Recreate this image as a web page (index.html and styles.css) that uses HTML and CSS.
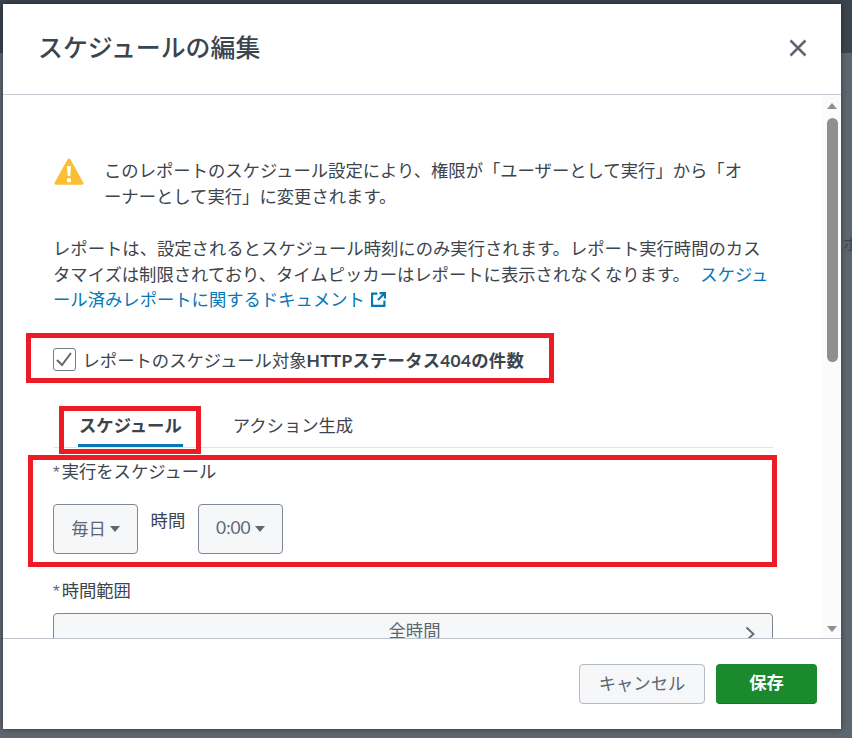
FILE: index.html
```html
<!DOCTYPE html>
<html lang="ja">
<head>
<meta charset="utf-8">
<title>スケジュールの編集</title>
<link rel="stylesheet" href="styles.css">
</head>
<body>
<span class="behind-text">ボ</span>
<div class="dialog">
  <header class="dialog-header">
    <h1 class="dialog-title">スケジュールの編集</h1>
    <svg class="close-icon" viewBox="0 0 18 18" aria-label="閉じる"><path d="M1.500 1.500l15 15M16.500 1.500l-15 15"/></svg>
  </header>
  <div class="dialog-body">
    <div class="content">
      <div class="warning">
        <svg class="warning-icon" viewBox="0 0 30 27"><path class="warning-fill" d="M15 0.500c.6 0 1.100.3 1.400.8l13 23.500c.5 1-.2 2-1.300 2H1.900c-1.100 0-1.800-1-1.300-2l13-23.500c.3-.5.8-.8 1.400-.8z"/><path class="warning-mark" d="M13 8h4l-.7 10h-2.600zM15 20a2.200 2.200 0 1 1 0 4.400a2.200 2.200 0 0 1 0-4.400z"/></svg>
        <p class="warning-text">このレポートのスケジュール設定により、権限が「ユーザーとして実行」から「オーナーとして実行」に変更されます。</p>
      </div>
      <p class="intro">レポートは、設定されるとスケジュール時刻にのみ実行されます。レポート実行時間のカスタマイズは制限されており、タイムピッカーはレポートに表示されなくなります。 <a class="doc-link" href="#">スケジュール済みレポートに関するドキュメント<svg class="ext-icon" viewBox="0 0 14 14"><path d="M6 1.500H1v11.500h11.500V8M6.500 7.500L13 1M8 1h5v5"/></svg></a></p>
      <label class="check-row">
        <span class="checkbox"><svg viewBox="0 0 21 21"><path d="M3 11l5 5L17 4"/></svg></span>
        <span class="check-label">レポートのスケジュール対象<b>HTTPステータス404の件数</b></span>
      </label>
      <div class="tabs">
        <div class="tab tab-active">スケジュール</div>
        <div class="tab">アクション生成</div>
      </div>
      <div class="field-label"><span class="req">*</span>実行をスケジュール</div>
      <div class="schedule-row">
        <button class="select-btn">毎日<span class="caret"></span></button>
        <span class="time-label">時間</span>
        <button class="select-btn">0:00<span class="caret"></span></button>
      </div>
      <div class="field-label range-label"><span class="req">*</span>時間範囲</div>
      <button class="range-btn">全時間<svg class="chev" viewBox="0 0 10 16"><path d="M1.500 1.500L8.500 8l-7 6.500"/></svg></button>
    </div>
    <div class="scrollbar">
      <span class="arrow-up"></span>
      <span class="thumb"></span>
      <span class="arrow-down"></span>
    </div>
  </div>
  <footer class="dialog-footer">
    <button class="btn btn-cancel">キャンセル</button>
    <button class="btn btn-save">保存</button>
  </footer>
</div>
<div class="callout callout-check"></div>
<div class="callout callout-tab"></div>
<div class="callout callout-schedule"></div>
</body>
</html>
```
FILE: styles.css
```css
* { box-sizing: border-box; }
html, body { margin: 0; height: 100%; }
body {
  position: relative;
  width: 852px;
  height: 738px;
  overflow: hidden;
  padding: 4px 11px 9px 3px;
  background: linear-gradient(#3c444e 0, #3c444e 53px, #5e666f 53px, #5e666f 100%);
  font-family: Lato, "Noto Sans CJK JP", sans-serif;
  color: #3c444d;
  font-size: 17.330px;
}
.behind-text { position: absolute; left: 843px; top: 232px; font-size: 16px; line-height: 24px; color: #3f464f; }
.dialog {
  position: relative;
  display: flex;
  flex-direction: column;
  height: 725px;
  background: #fff;
  box-shadow: 0 0 6px rgba(0, 0, 0, .45);
}
.dialog-header {
  flex: none;
  height: 91px;
  display: flex;
  align-items: center;
  justify-content: space-between;
  padding: 0 34px 3px 35px;
  border-bottom: 1px solid #c3cbd4;
}
.dialog-title {
  margin: 0 0 2px;
  font-size: 24.900px;
  font-weight: 500;
  line-height: 36px;
}
.close-icon { width: 18px; height: 18px; fill: none; stroke: #5c6773; stroke-width: 2.500; }
.dialog-body { flex: 1; min-height: 0; display: flex; }
.content {
  flex: 1;
  min-width: 0;
  overflow: hidden;
  padding: 63px 50px 0;
}
.warning { display: flex; gap: 20px; padding-right: 14px; }
.warning-icon { flex: none; width: 30px; height: 27px; margin: 0 0 0 1px; }
.warning-text { margin: 0; line-height: 25.700px; }
.warning-fill { fill: #fbbf35; }
.warning-mark { fill: #fff; }
.intro { margin: 27px 0 0; line-height: 25.500px; }
.doc-link { margin-left: 6px; color: #0877b6; text-decoration: none; }
.ext-icon { width: 15px; height: 15px; margin-left: 6px; vertical-align: -1px; fill: none; stroke: #0877b6; stroke-width: 2; }
.check-row { display: flex; align-items: center; gap: 6.500px; margin-top: 35px; height: 24px; }
.checkbox {
  flex: none;
  width: 23px;
  height: 23px;
  border: 1px solid #727d8a;
  border-radius: 3px;
  background: #fff;
}
.checkbox svg { display: block; width: 21px; height: 21px; fill: none; stroke: #5c6773; stroke-width: 2; }
.check-label b { font-weight: 700; letter-spacing: .25px; }
.tabs {
  display: flex;
  gap: 50px;
  height: 64px;
  margin-top: 12px;
  padding: 24px 0 0 25px;
  border-bottom: 1px solid #e1e4e8;
}
.tab { height: 39px; padding-top: 2px; line-height: 31px; }
.tab-active { font-weight: 700; border-bottom: 3px solid #0877b6; padding: 2px 1px 0; }
.field-label { margin-top: 11px; line-height: 25px; }
.req { font: 17px "Liberation Sans", sans-serif; margin-right: 2px; color: #5c6773; }
.schedule-row { display: flex; align-items: flex-start; gap: 12.600px; margin-top: 20px; }
button { font: inherit; color: inherit; }
.select-btn {
  display: flex;
  align-items: center;
  justify-content: center;
  gap: 4px;
  width: 85px;
  height: 50px;
  padding: 0 0 3px;
  border: 1px solid #7e8894;
  border-radius: 4px;
  background: #f6f7f9;
  color: #5c6773;
}
.caret { width: 0; height: 0; margin-top: 3px; border: 5px solid transparent; border-top: 6px solid #5c6773; border-bottom: 0; }
.time-label { line-height: 34px; }
.range-label { margin-top: 24px; }
.range-btn {
  position: relative;
  display: flex;
  justify-content: center;
  align-items: flex-start;
  width: 100%;
  height: 50px;
  margin-top: 10px;
  padding: 2px 0 0 3px;
  line-height: 30px;
  border: 1px solid #7e8894;
  border-radius: 4px;
  background: #f6f7f9;
  color: #5c6773;
}
.chev { position: absolute; right: 17px; top: 12px; width: 10px; height: 16px; fill: none; stroke: #5c6773; stroke-width: 1.800; }
.scrollbar {
  flex: none;
  width: 18px;
  display: flex;
  flex-direction: column;
  align-items: center;
  background: #fbfbfb;
  padding: 8px 0 6px;
}
.arrow-up { width: 0; height: 0; border: 5px solid transparent; border-bottom: 6px solid #8f8f8f; border-top: 0; }
.thumb { width: 11px; height: 244px; margin-top: 9px; border-radius: 6px; background: #8f8f8f; }
.arrow-down { width: 0; height: 0; margin-top: auto; border: 5px solid transparent; border-top: 6px solid #8f8f8f; border-bottom: 0; }
.dialog-footer {
  flex: none;
  height: 91px;
  display: flex;
  justify-content: flex-end;
  align-items: flex-start;
  gap: 11px;
  padding: 25px 24px 0 0;
  border-top: 1px solid #bcc4cd;
}
.btn { height: 40px; border-radius: 4px; padding: 0 0 4px; }
.btn-cancel { width: 126px; border: 1px solid #b3bac3; background: #f6f7f9; color: #5c6773; }
.btn-save { width: 101px; border: 0; border-bottom: 1px solid #17732a; background: #1b8a2e; color: #fff; font-weight: 700; }
.callout { position: absolute; border: 5px solid #ed1c24; }
.callout-check { left: 26px; top: 333px; width: 528px; height: 50px; }
.callout-tab { left: 59px; top: 406px; width: 142px; height: 48px; }
.callout-schedule { left: 28px; top: 455px; width: 749px; height: 112px; }
```
